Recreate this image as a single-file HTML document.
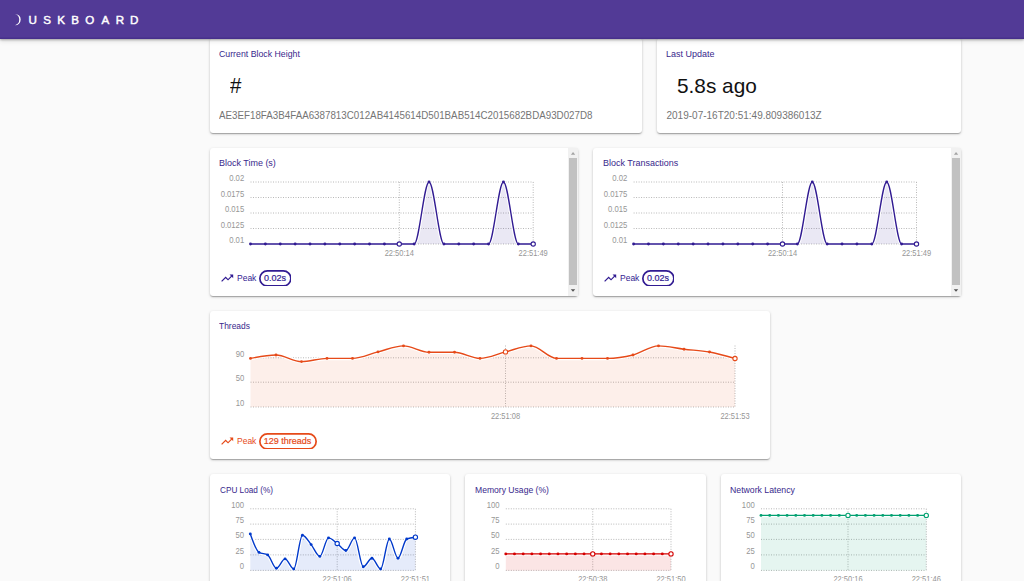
<!DOCTYPE html>
<html><head><meta charset="utf-8"><style>
html,body{margin:0;padding:0}
body{width:1024px;height:581px;overflow:hidden;background:#fafafa;position:relative;font-family:"Liberation Sans",sans-serif}
.hdr{position:absolute;left:0;top:0;width:1024px;height:38.5px;background:#523a96;z-index:5;box-shadow:inset 0 -1.6px 0 rgba(20,0,90,.16),0 1px 2px rgba(0,0,0,.28),0 2px 5px rgba(0,0,0,.12)}
.card{position:absolute;background:#fff;border-radius:3px;box-shadow:0 1px 3px 0 rgba(0,0,0,.2),0 1px 1px 0 rgba(0,0,0,.14),0 2px 1px -1px rgba(0,0,0,.12)}
.t{position:absolute;white-space:nowrap;z-index:2}
.ti{color:#38288c}
.sub{color:#757575}
.big{color:#111}
svg.ch{position:absolute;left:0;top:0;z-index:2}
.g{stroke:#b8b8b8;stroke-width:1;stroke-dasharray:1 1.5}
.yl,.xl{font-size:8.6px;fill:#969696;font-family:"Liberation Sans",sans-serif}
.ic{position:absolute;z-index:2}
.badge{position:absolute;z-index:2;height:12.8px;font-size:9px;-webkit-text-stroke:0.2px;line-height:12.8px;text-align:center}
.sb{position:absolute;z-index:3;background:#f1f1f1}
.sbt{position:absolute;background:#c1c1c1}
</style></head><body>

<div class="hdr"><svg style="position:absolute;left:0;top:0" width="30" height="38"><path d="M15,13.9 A5.65,5.65 0 0 1 15,25.3 A5.95,5.95 0 0 0 15,13.9Z" fill="#fff"/></svg><div class="t" style="left:22.80px;top:13px;width:20px;text-align:center;font-size:11.6px;line-height:14px;-webkit-text-stroke:0.45px #fff;color:#fff">U</div><div class="t" style="left:37.05px;top:13px;width:20px;text-align:center;font-size:11.6px;line-height:14px;-webkit-text-stroke:0.45px #fff;color:#fff">S</div><div class="t" style="left:51.10px;top:13px;width:20px;text-align:center;font-size:11.6px;line-height:14px;-webkit-text-stroke:0.45px #fff;color:#fff">K</div><div class="t" style="left:65.20px;top:13px;width:20px;text-align:center;font-size:11.6px;line-height:14px;-webkit-text-stroke:0.45px #fff;color:#fff">B</div><div class="t" style="left:79.80px;top:13px;width:20px;text-align:center;font-size:11.6px;line-height:14px;-webkit-text-stroke:0.45px #fff;color:#fff">O</div><div class="t" style="left:95.35px;top:13px;width:20px;text-align:center;font-size:11.6px;line-height:14px;-webkit-text-stroke:0.45px #fff;color:#fff">A</div><div class="t" style="left:110.05px;top:13px;width:20px;text-align:center;font-size:11.6px;line-height:14px;-webkit-text-stroke:0.45px #fff;color:#fff">R</div><div class="t" style="left:124.20px;top:13px;width:20px;text-align:center;font-size:11.6px;line-height:14px;-webkit-text-stroke:0.45px #fff;color:#fff">D</div></div>
<div class="card" style="left:210.00px;top:38.00px;width:432.00px;height:95.00px;"></div>
<div class="card" style="left:657.00px;top:38.00px;width:304.00px;height:95.00px;"></div>
<div class="card" style="left:210.00px;top:148.00px;width:368.00px;height:148.00px;"></div>
<div class="card" style="left:593.00px;top:148.00px;width:368.00px;height:148.00px;"></div>
<div class="card" style="left:210.00px;top:311.00px;width:559.50px;height:148.00px;"></div>
<div class="card" style="left:210.00px;top:474.00px;width:240.30px;height:160.00px;"></div>
<div class="card" style="left:465.30px;top:474.00px;width:240.40px;height:160.00px;"></div>
<div class="card" style="left:720.70px;top:474.00px;width:240.30px;height:160.00px;"></div>
<div class="t ti" style="left:219.30px;top:49.39px;font-size:9.40px;line-height:10.80px;transform:scaleX(0.9345);transform-origin:0 0">Current Block Height</div>
<div class="t big" style="left:229.90px;top:72.37px;font-size:22.80px;line-height:26.20px;transform:scaleX(0.9000);transform-origin:0 0">#</div>
<div class="t sub" style="left:218.80px;top:110.19px;font-size:10.40px;line-height:11.95px;transform:scaleX(0.9410);transform-origin:0 0">AE3EF18FA3B4FAA6387813C012AB4145614D501BAB514C2015682BDA93D027D8</div>
<div class="t ti" style="left:666.30px;top:49.39px;font-size:9.40px;line-height:10.80px;transform:scaleX(0.9574);transform-origin:0 0">Last Update</div>
<div class="t big" style="left:677.00px;top:73.98px;font-size:20.80px;line-height:23.90px">5.8s ago</div>
<div class="t sub" style="left:666.50px;top:109.65px;font-size:10.00px;line-height:11.49px">2019-07-16T20:51:49.809386013Z</div>
<div class="t ti" style="left:219.30px;top:158.29px;font-size:9.40px;line-height:10.80px;transform:scaleX(0.9574);transform-origin:0 0">Block Time (s)</div>
<div class="t ti" style="left:602.50px;top:158.29px;font-size:9.40px;line-height:10.80px;transform:scaleX(0.9574);transform-origin:0 0">Block Transactions</div>
<div class="t ti" style="left:219.30px;top:321.49px;font-size:9.40px;line-height:10.80px;transform:scaleX(0.9000);transform-origin:0 0">Threads</div>
<div class="t ti" style="left:219.50px;top:484.79px;font-size:9.40px;line-height:10.80px;transform:scaleX(0.8761);transform-origin:0 0">CPU Load (%)</div>
<div class="t ti" style="left:474.80px;top:484.79px;font-size:9.40px;line-height:10.80px;transform:scaleX(0.9153);transform-origin:0 0">Memory Usage (%)</div>
<div class="t ti" style="left:730.30px;top:484.79px;font-size:9.40px;line-height:10.80px;transform:scaleX(0.9287);transform-origin:0 0">Network Latency</div>
<svg class="ch" width="1024" height="581" viewBox="0 0 1024 581"><line x1="250.50" y1="244.00" x2="533.20" y2="244.00" class="g"/>
<line x1="250.50" y1="228.50" x2="533.20" y2="228.50" class="g"/>
<line x1="250.50" y1="213.00" x2="533.20" y2="213.00" class="g"/>
<line x1="250.50" y1="197.50" x2="533.20" y2="197.50" class="g"/>
<line x1="250.50" y1="182.00" x2="533.20" y2="182.00" class="g"/>
<line x1="399.29" y1="182.00" x2="399.29" y2="244.00" class="g"/>
<line x1="533.20" y1="182.00" x2="533.20" y2="244.00" class="g"/>
<path d="M250.50,244.00C255.46,244.00 260.42,244.00 265.38,244.00C270.34,244.00 275.30,244.00 280.26,244.00C285.22,244.00 290.18,244.00 295.14,244.00C300.10,244.00 305.06,244.00 310.02,244.00C314.98,244.00 319.94,244.00 324.89,244.00C329.85,244.00 334.81,244.00 339.77,244.00C344.73,244.00 349.69,244.00 354.65,244.00C359.61,244.00 364.57,244.00 369.53,244.00C374.49,244.00 379.45,244.00 384.41,244.00C389.37,244.00 394.33,244.00 399.29,244.00C404.25,244.00 409.21,244.00 414.17,244.00C419.13,244.00 424.09,182.00 429.05,182.00C434.01,182.00 438.97,244.00 443.93,244.00C448.89,244.00 453.85,244.00 458.81,244.00C463.76,244.00 468.72,244.00 473.68,244.00C478.64,244.00 483.60,244.00 488.56,244.00C493.52,244.00 498.48,182.00 503.44,182.00C508.40,182.00 513.36,244.00 518.32,244.00C523.28,244.00 528.24,244.00 533.20,244.00L533.20,244.00L250.50,244.00Z" fill="#311b92" fill-opacity="0.1" stroke="none"/>
<path d="M250.50,244.00C255.46,244.00 260.42,244.00 265.38,244.00C270.34,244.00 275.30,244.00 280.26,244.00C285.22,244.00 290.18,244.00 295.14,244.00C300.10,244.00 305.06,244.00 310.02,244.00C314.98,244.00 319.94,244.00 324.89,244.00C329.85,244.00 334.81,244.00 339.77,244.00C344.73,244.00 349.69,244.00 354.65,244.00C359.61,244.00 364.57,244.00 369.53,244.00C374.49,244.00 379.45,244.00 384.41,244.00C389.37,244.00 394.33,244.00 399.29,244.00C404.25,244.00 409.21,244.00 414.17,244.00C419.13,244.00 424.09,182.00 429.05,182.00C434.01,182.00 438.97,244.00 443.93,244.00C448.89,244.00 453.85,244.00 458.81,244.00C463.76,244.00 468.72,244.00 473.68,244.00C478.64,244.00 483.60,244.00 488.56,244.00C493.52,244.00 498.48,182.00 503.44,182.00C508.40,182.00 513.36,244.00 518.32,244.00C523.28,244.00 528.24,244.00 533.20,244.00" fill="none" stroke="#fff" stroke-width="3.6" stroke-linejoin="round"/>
<path d="M250.50,244.00C255.46,244.00 260.42,244.00 265.38,244.00C270.34,244.00 275.30,244.00 280.26,244.00C285.22,244.00 290.18,244.00 295.14,244.00C300.10,244.00 305.06,244.00 310.02,244.00C314.98,244.00 319.94,244.00 324.89,244.00C329.85,244.00 334.81,244.00 339.77,244.00C344.73,244.00 349.69,244.00 354.65,244.00C359.61,244.00 364.57,244.00 369.53,244.00C374.49,244.00 379.45,244.00 384.41,244.00C389.37,244.00 394.33,244.00 399.29,244.00C404.25,244.00 409.21,244.00 414.17,244.00C419.13,244.00 424.09,182.00 429.05,182.00C434.01,182.00 438.97,244.00 443.93,244.00C448.89,244.00 453.85,244.00 458.81,244.00C463.76,244.00 468.72,244.00 473.68,244.00C478.64,244.00 483.60,244.00 488.56,244.00C493.52,244.00 498.48,182.00 503.44,182.00C508.40,182.00 513.36,244.00 518.32,244.00C523.28,244.00 528.24,244.00 533.20,244.00" fill="none" stroke="#311b92" stroke-width="1.4"/>
<circle cx="250.50" cy="244.00" r="1.45" fill="#311b92"/>
<circle cx="265.38" cy="244.00" r="1.45" fill="#311b92"/>
<circle cx="280.26" cy="244.00" r="1.45" fill="#311b92"/>
<circle cx="295.14" cy="244.00" r="1.45" fill="#311b92"/>
<circle cx="310.02" cy="244.00" r="1.45" fill="#311b92"/>
<circle cx="324.89" cy="244.00" r="1.45" fill="#311b92"/>
<circle cx="339.77" cy="244.00" r="1.45" fill="#311b92"/>
<circle cx="354.65" cy="244.00" r="1.45" fill="#311b92"/>
<circle cx="369.53" cy="244.00" r="1.45" fill="#311b92"/>
<circle cx="384.41" cy="244.00" r="1.45" fill="#311b92"/>
<circle cx="399.29" cy="244.00" r="2.15" fill="#fff" stroke="#311b92" stroke-width="1.1"/>
<circle cx="414.17" cy="244.00" r="1.45" fill="#311b92"/>
<circle cx="429.05" cy="182.00" r="1.45" fill="#311b92"/>
<circle cx="443.93" cy="244.00" r="1.45" fill="#311b92"/>
<circle cx="458.81" cy="244.00" r="1.45" fill="#311b92"/>
<circle cx="473.68" cy="244.00" r="1.45" fill="#311b92"/>
<circle cx="488.56" cy="244.00" r="1.45" fill="#311b92"/>
<circle cx="503.44" cy="182.00" r="1.45" fill="#311b92"/>
<circle cx="518.32" cy="244.00" r="1.45" fill="#311b92"/>
<circle cx="533.20" cy="244.00" r="2.15" fill="#fff" stroke="#311b92" stroke-width="1.1"/>
<text x="229.21" y="243.00" class="yl" textLength="14.99" lengthAdjust="spacingAndGlyphs">0.01</text>
<text x="220.65" y="227.50" class="yl" textLength="23.55" lengthAdjust="spacingAndGlyphs">0.0125</text>
<text x="224.93" y="212.00" class="yl" textLength="19.27" lengthAdjust="spacingAndGlyphs">0.015</text>
<text x="220.65" y="196.50" class="yl" textLength="23.55" lengthAdjust="spacingAndGlyphs">0.0175</text>
<text x="229.21" y="181.00" class="yl" textLength="14.99" lengthAdjust="spacingAndGlyphs">0.02</text>
<text x="384.69" y="255.60" class="xl" textLength="29.19" lengthAdjust="spacingAndGlyphs">22:50:14</text>
<text x="518.60" y="255.60" class="xl" textLength="29.19" lengthAdjust="spacingAndGlyphs">22:51:49</text>
<line x1="633.60" y1="244.00" x2="916.50" y2="244.00" class="g"/>
<line x1="633.60" y1="228.50" x2="916.50" y2="228.50" class="g"/>
<line x1="633.60" y1="213.00" x2="916.50" y2="213.00" class="g"/>
<line x1="633.60" y1="197.50" x2="916.50" y2="197.50" class="g"/>
<line x1="633.60" y1="182.00" x2="916.50" y2="182.00" class="g"/>
<line x1="782.49" y1="182.00" x2="782.49" y2="244.00" class="g"/>
<line x1="916.50" y1="182.00" x2="916.50" y2="244.00" class="g"/>
<path d="M633.60,244.00C638.56,244.00 643.53,244.00 648.49,244.00C653.45,244.00 658.42,244.00 663.38,244.00C668.34,244.00 673.31,244.00 678.27,244.00C683.23,244.00 688.19,244.00 693.16,244.00C698.12,244.00 703.08,244.00 708.05,244.00C713.01,244.00 717.97,244.00 722.94,244.00C727.90,244.00 732.86,244.00 737.83,244.00C742.79,244.00 747.75,244.00 752.72,244.00C757.68,244.00 762.64,244.00 767.61,244.00C772.57,244.00 777.53,244.00 782.49,244.00C787.46,244.00 792.42,244.00 797.38,244.00C802.35,244.00 807.31,182.00 812.27,182.00C817.24,182.00 822.20,244.00 827.16,244.00C832.13,244.00 837.09,244.00 842.05,244.00C847.02,244.00 851.98,244.00 856.94,244.00C861.91,244.00 866.87,244.00 871.83,244.00C876.79,244.00 881.76,182.00 886.72,182.00C891.68,182.00 896.65,244.00 901.61,244.00C906.57,244.00 911.54,244.00 916.50,244.00L916.50,244.00L633.60,244.00Z" fill="#311b92" fill-opacity="0.1" stroke="none"/>
<path d="M633.60,244.00C638.56,244.00 643.53,244.00 648.49,244.00C653.45,244.00 658.42,244.00 663.38,244.00C668.34,244.00 673.31,244.00 678.27,244.00C683.23,244.00 688.19,244.00 693.16,244.00C698.12,244.00 703.08,244.00 708.05,244.00C713.01,244.00 717.97,244.00 722.94,244.00C727.90,244.00 732.86,244.00 737.83,244.00C742.79,244.00 747.75,244.00 752.72,244.00C757.68,244.00 762.64,244.00 767.61,244.00C772.57,244.00 777.53,244.00 782.49,244.00C787.46,244.00 792.42,244.00 797.38,244.00C802.35,244.00 807.31,182.00 812.27,182.00C817.24,182.00 822.20,244.00 827.16,244.00C832.13,244.00 837.09,244.00 842.05,244.00C847.02,244.00 851.98,244.00 856.94,244.00C861.91,244.00 866.87,244.00 871.83,244.00C876.79,244.00 881.76,182.00 886.72,182.00C891.68,182.00 896.65,244.00 901.61,244.00C906.57,244.00 911.54,244.00 916.50,244.00" fill="none" stroke="#fff" stroke-width="3.6" stroke-linejoin="round"/>
<path d="M633.60,244.00C638.56,244.00 643.53,244.00 648.49,244.00C653.45,244.00 658.42,244.00 663.38,244.00C668.34,244.00 673.31,244.00 678.27,244.00C683.23,244.00 688.19,244.00 693.16,244.00C698.12,244.00 703.08,244.00 708.05,244.00C713.01,244.00 717.97,244.00 722.94,244.00C727.90,244.00 732.86,244.00 737.83,244.00C742.79,244.00 747.75,244.00 752.72,244.00C757.68,244.00 762.64,244.00 767.61,244.00C772.57,244.00 777.53,244.00 782.49,244.00C787.46,244.00 792.42,244.00 797.38,244.00C802.35,244.00 807.31,182.00 812.27,182.00C817.24,182.00 822.20,244.00 827.16,244.00C832.13,244.00 837.09,244.00 842.05,244.00C847.02,244.00 851.98,244.00 856.94,244.00C861.91,244.00 866.87,244.00 871.83,244.00C876.79,244.00 881.76,182.00 886.72,182.00C891.68,182.00 896.65,244.00 901.61,244.00C906.57,244.00 911.54,244.00 916.50,244.00" fill="none" stroke="#311b92" stroke-width="1.4"/>
<circle cx="633.60" cy="244.00" r="1.45" fill="#311b92"/>
<circle cx="648.49" cy="244.00" r="1.45" fill="#311b92"/>
<circle cx="663.38" cy="244.00" r="1.45" fill="#311b92"/>
<circle cx="678.27" cy="244.00" r="1.45" fill="#311b92"/>
<circle cx="693.16" cy="244.00" r="1.45" fill="#311b92"/>
<circle cx="708.05" cy="244.00" r="1.45" fill="#311b92"/>
<circle cx="722.94" cy="244.00" r="1.45" fill="#311b92"/>
<circle cx="737.83" cy="244.00" r="1.45" fill="#311b92"/>
<circle cx="752.72" cy="244.00" r="1.45" fill="#311b92"/>
<circle cx="767.61" cy="244.00" r="1.45" fill="#311b92"/>
<circle cx="782.49" cy="244.00" r="2.15" fill="#fff" stroke="#311b92" stroke-width="1.1"/>
<circle cx="797.38" cy="244.00" r="1.45" fill="#311b92"/>
<circle cx="812.27" cy="182.00" r="1.45" fill="#311b92"/>
<circle cx="827.16" cy="244.00" r="1.45" fill="#311b92"/>
<circle cx="842.05" cy="244.00" r="1.45" fill="#311b92"/>
<circle cx="856.94" cy="244.00" r="1.45" fill="#311b92"/>
<circle cx="871.83" cy="244.00" r="1.45" fill="#311b92"/>
<circle cx="886.72" cy="182.00" r="1.45" fill="#311b92"/>
<circle cx="901.61" cy="244.00" r="1.45" fill="#311b92"/>
<circle cx="916.50" cy="244.00" r="2.15" fill="#fff" stroke="#311b92" stroke-width="1.1"/>
<text x="612.31" y="243.00" class="yl" textLength="14.99" lengthAdjust="spacingAndGlyphs">0.01</text>
<text x="603.75" y="227.50" class="yl" textLength="23.55" lengthAdjust="spacingAndGlyphs">0.0125</text>
<text x="608.03" y="212.00" class="yl" textLength="19.27" lengthAdjust="spacingAndGlyphs">0.015</text>
<text x="603.75" y="196.50" class="yl" textLength="23.55" lengthAdjust="spacingAndGlyphs">0.0175</text>
<text x="612.31" y="181.00" class="yl" textLength="14.99" lengthAdjust="spacingAndGlyphs">0.02</text>
<text x="767.90" y="255.60" class="xl" textLength="29.19" lengthAdjust="spacingAndGlyphs">22:50:14</text>
<text x="901.90" y="255.60" class="xl" textLength="29.19" lengthAdjust="spacingAndGlyphs">22:51:49</text>
<line x1="250.50" y1="407.00" x2="735.00" y2="407.00" class="g"/>
<line x1="250.50" y1="382.20" x2="735.00" y2="382.20" class="g"/>
<line x1="250.50" y1="357.80" x2="735.00" y2="357.80" class="g"/>
<line x1="505.50" y1="345.50" x2="505.50" y2="407.00" class="g"/>
<line x1="735.00" y1="345.50" x2="735.00" y2="407.00" class="g"/>
<path d="M250.50,358.40C259.00,356.70 267.50,355.00 276.00,355.00C284.50,355.00 293.00,361.60 301.50,361.60C310.00,361.60 318.50,358.40 327.00,358.40C335.50,358.40 344.00,358.40 352.50,358.40C361.00,358.40 369.50,353.98 378.00,351.90C386.50,349.82 395.00,345.90 403.50,345.90C412.00,345.90 420.50,352.20 429.00,352.20C437.50,352.20 446.00,352.20 454.50,352.20C463.00,352.20 471.50,358.40 480.00,358.40C488.50,358.40 497.00,353.98 505.50,351.90C514.00,349.82 522.50,345.90 531.00,345.90C539.50,345.90 548.00,358.40 556.50,358.40C565.00,358.40 573.50,358.40 582.00,358.40C590.50,358.40 599.00,358.40 607.50,358.40C616.00,358.40 624.50,357.08 633.00,355.00C641.50,352.92 650.00,345.90 658.50,345.90C667.00,345.90 675.50,348.18 684.00,349.20C692.50,350.22 701.00,350.45 709.50,352.00C718.00,353.55 726.50,356.02 735.00,358.50L735.00,407.00L250.50,407.00Z" fill="#e64a19" fill-opacity="0.09" stroke="none"/>
<path d="M250.50,358.40C259.00,356.70 267.50,355.00 276.00,355.00C284.50,355.00 293.00,361.60 301.50,361.60C310.00,361.60 318.50,358.40 327.00,358.40C335.50,358.40 344.00,358.40 352.50,358.40C361.00,358.40 369.50,353.98 378.00,351.90C386.50,349.82 395.00,345.90 403.50,345.90C412.00,345.90 420.50,352.20 429.00,352.20C437.50,352.20 446.00,352.20 454.50,352.20C463.00,352.20 471.50,358.40 480.00,358.40C488.50,358.40 497.00,353.98 505.50,351.90C514.00,349.82 522.50,345.90 531.00,345.90C539.50,345.90 548.00,358.40 556.50,358.40C565.00,358.40 573.50,358.40 582.00,358.40C590.50,358.40 599.00,358.40 607.50,358.40C616.00,358.40 624.50,357.08 633.00,355.00C641.50,352.92 650.00,345.90 658.50,345.90C667.00,345.90 675.50,348.18 684.00,349.20C692.50,350.22 701.00,350.45 709.50,352.00C718.00,353.55 726.50,356.02 735.00,358.50" fill="none" stroke="#fff" stroke-width="3.6" stroke-linejoin="round"/>
<path d="M250.50,358.40C259.00,356.70 267.50,355.00 276.00,355.00C284.50,355.00 293.00,361.60 301.50,361.60C310.00,361.60 318.50,358.40 327.00,358.40C335.50,358.40 344.00,358.40 352.50,358.40C361.00,358.40 369.50,353.98 378.00,351.90C386.50,349.82 395.00,345.90 403.50,345.90C412.00,345.90 420.50,352.20 429.00,352.20C437.50,352.20 446.00,352.20 454.50,352.20C463.00,352.20 471.50,358.40 480.00,358.40C488.50,358.40 497.00,353.98 505.50,351.90C514.00,349.82 522.50,345.90 531.00,345.90C539.50,345.90 548.00,358.40 556.50,358.40C565.00,358.40 573.50,358.40 582.00,358.40C590.50,358.40 599.00,358.40 607.50,358.40C616.00,358.40 624.50,357.08 633.00,355.00C641.50,352.92 650.00,345.90 658.50,345.90C667.00,345.90 675.50,348.18 684.00,349.20C692.50,350.22 701.00,350.45 709.50,352.00C718.00,353.55 726.50,356.02 735.00,358.50" fill="none" stroke="#e64a19" stroke-width="1.4"/>
<circle cx="250.50" cy="358.40" r="1.45" fill="#e64a19"/>
<circle cx="276.00" cy="355.00" r="1.45" fill="#e64a19"/>
<circle cx="301.50" cy="361.60" r="1.45" fill="#e64a19"/>
<circle cx="327.00" cy="358.40" r="1.45" fill="#e64a19"/>
<circle cx="352.50" cy="358.40" r="1.45" fill="#e64a19"/>
<circle cx="378.00" cy="351.90" r="1.45" fill="#e64a19"/>
<circle cx="403.50" cy="345.90" r="1.45" fill="#e64a19"/>
<circle cx="429.00" cy="352.20" r="1.45" fill="#e64a19"/>
<circle cx="454.50" cy="352.20" r="1.45" fill="#e64a19"/>
<circle cx="480.00" cy="358.40" r="1.45" fill="#e64a19"/>
<circle cx="505.50" cy="351.90" r="2.15" fill="#fff" stroke="#e64a19" stroke-width="1.1"/>
<circle cx="531.00" cy="345.90" r="1.45" fill="#e64a19"/>
<circle cx="556.50" cy="358.40" r="1.45" fill="#e64a19"/>
<circle cx="582.00" cy="358.40" r="1.45" fill="#e64a19"/>
<circle cx="607.50" cy="358.40" r="1.45" fill="#e64a19"/>
<circle cx="633.00" cy="355.00" r="1.45" fill="#e64a19"/>
<circle cx="658.50" cy="345.90" r="1.45" fill="#e64a19"/>
<circle cx="684.00" cy="349.20" r="1.45" fill="#e64a19"/>
<circle cx="709.50" cy="352.00" r="1.45" fill="#e64a19"/>
<circle cx="735.00" cy="358.50" r="2.15" fill="#fff" stroke="#e64a19" stroke-width="1.1"/>
<text x="235.64" y="406.00" class="yl" textLength="8.56" lengthAdjust="spacingAndGlyphs">10</text>
<text x="235.64" y="381.20" class="yl" textLength="8.56" lengthAdjust="spacingAndGlyphs">50</text>
<text x="235.64" y="356.80" class="yl" textLength="8.56" lengthAdjust="spacingAndGlyphs">90</text>
<text x="490.90" y="418.60" class="xl" textLength="29.19" lengthAdjust="spacingAndGlyphs">22:51:08</text>
<text x="720.40" y="418.60" class="xl" textLength="29.19" lengthAdjust="spacingAndGlyphs">22:51:53</text>
<line x1="250.30" y1="570.40" x2="415.40" y2="570.40" class="g"/>
<line x1="250.30" y1="554.90" x2="415.40" y2="554.90" class="g"/>
<line x1="250.30" y1="539.40" x2="415.40" y2="539.40" class="g"/>
<line x1="250.30" y1="524.10" x2="415.40" y2="524.10" class="g"/>
<line x1="250.30" y1="508.80" x2="415.40" y2="508.80" class="g"/>
<line x1="337.19" y1="508.80" x2="337.19" y2="570.40" class="g"/>
<line x1="415.40" y1="508.80" x2="415.40" y2="570.40" class="g"/>
<path d="M250.30,533.90C253.20,542.32 256.09,550.73 258.99,552.40C261.89,554.07 264.78,553.23 267.68,554.90C270.58,556.57 273.47,568.20 276.37,568.20C279.26,568.20 282.16,558.90 285.06,558.90C287.95,558.90 290.85,569.00 293.75,569.00C296.64,569.00 299.54,535.20 302.44,535.20C305.33,535.20 308.23,541.07 311.13,544.60C314.02,548.13 316.92,556.40 319.82,556.40C322.71,556.40 325.61,537.90 328.51,537.90C331.40,537.90 334.30,541.40 337.19,543.50C340.09,545.60 342.99,550.50 345.88,550.50C348.78,550.50 351.68,537.90 354.57,537.90C357.47,537.90 360.37,566.70 363.26,566.70C366.16,566.70 369.06,558.30 371.95,558.30C374.85,558.30 377.75,569.00 380.64,569.00C383.54,569.00 386.44,539.00 389.33,539.00C392.23,539.00 395.12,558.20 398.02,558.20C400.92,558.20 403.81,540.20 406.71,539.00C409.61,537.80 412.50,537.50 415.40,537.20L415.40,570.40L250.30,570.40Z" fill="#0039cb" fill-opacity="0.1" stroke="none"/>
<path d="M250.30,533.90C253.20,542.32 256.09,550.73 258.99,552.40C261.89,554.07 264.78,553.23 267.68,554.90C270.58,556.57 273.47,568.20 276.37,568.20C279.26,568.20 282.16,558.90 285.06,558.90C287.95,558.90 290.85,569.00 293.75,569.00C296.64,569.00 299.54,535.20 302.44,535.20C305.33,535.20 308.23,541.07 311.13,544.60C314.02,548.13 316.92,556.40 319.82,556.40C322.71,556.40 325.61,537.90 328.51,537.90C331.40,537.90 334.30,541.40 337.19,543.50C340.09,545.60 342.99,550.50 345.88,550.50C348.78,550.50 351.68,537.90 354.57,537.90C357.47,537.90 360.37,566.70 363.26,566.70C366.16,566.70 369.06,558.30 371.95,558.30C374.85,558.30 377.75,569.00 380.64,569.00C383.54,569.00 386.44,539.00 389.33,539.00C392.23,539.00 395.12,558.20 398.02,558.20C400.92,558.20 403.81,540.20 406.71,539.00C409.61,537.80 412.50,537.50 415.40,537.20" fill="none" stroke="#fff" stroke-width="3.6" stroke-linejoin="round"/>
<path d="M250.30,533.90C253.20,542.32 256.09,550.73 258.99,552.40C261.89,554.07 264.78,553.23 267.68,554.90C270.58,556.57 273.47,568.20 276.37,568.20C279.26,568.20 282.16,558.90 285.06,558.90C287.95,558.90 290.85,569.00 293.75,569.00C296.64,569.00 299.54,535.20 302.44,535.20C305.33,535.20 308.23,541.07 311.13,544.60C314.02,548.13 316.92,556.40 319.82,556.40C322.71,556.40 325.61,537.90 328.51,537.90C331.40,537.90 334.30,541.40 337.19,543.50C340.09,545.60 342.99,550.50 345.88,550.50C348.78,550.50 351.68,537.90 354.57,537.90C357.47,537.90 360.37,566.70 363.26,566.70C366.16,566.70 369.06,558.30 371.95,558.30C374.85,558.30 377.75,569.00 380.64,569.00C383.54,569.00 386.44,539.00 389.33,539.00C392.23,539.00 395.12,558.20 398.02,558.20C400.92,558.20 403.81,540.20 406.71,539.00C409.61,537.80 412.50,537.50 415.40,537.20" fill="none" stroke="#0039cb" stroke-width="1.4"/>
<circle cx="250.30" cy="533.90" r="1.45" fill="#0039cb"/>
<circle cx="258.99" cy="552.40" r="1.45" fill="#0039cb"/>
<circle cx="267.68" cy="554.90" r="1.45" fill="#0039cb"/>
<circle cx="276.37" cy="568.20" r="1.45" fill="#0039cb"/>
<circle cx="285.06" cy="558.90" r="1.45" fill="#0039cb"/>
<circle cx="293.75" cy="569.00" r="1.45" fill="#0039cb"/>
<circle cx="302.44" cy="535.20" r="1.45" fill="#0039cb"/>
<circle cx="311.13" cy="544.60" r="1.45" fill="#0039cb"/>
<circle cx="319.82" cy="556.40" r="1.45" fill="#0039cb"/>
<circle cx="328.51" cy="537.90" r="1.45" fill="#0039cb"/>
<circle cx="337.19" cy="543.50" r="2.15" fill="#fff" stroke="#0039cb" stroke-width="1.1"/>
<circle cx="345.88" cy="550.50" r="1.45" fill="#0039cb"/>
<circle cx="354.57" cy="537.90" r="1.45" fill="#0039cb"/>
<circle cx="363.26" cy="566.70" r="1.45" fill="#0039cb"/>
<circle cx="371.95" cy="558.30" r="1.45" fill="#0039cb"/>
<circle cx="380.64" cy="569.00" r="1.45" fill="#0039cb"/>
<circle cx="389.33" cy="539.00" r="1.45" fill="#0039cb"/>
<circle cx="398.02" cy="558.20" r="1.45" fill="#0039cb"/>
<circle cx="406.71" cy="539.00" r="1.45" fill="#0039cb"/>
<circle cx="415.40" cy="537.20" r="2.15" fill="#fff" stroke="#0039cb" stroke-width="1.1"/>
<text x="239.72" y="569.40" class="yl" textLength="4.28" lengthAdjust="spacingAndGlyphs">0</text>
<text x="235.44" y="553.90" class="yl" textLength="8.56" lengthAdjust="spacingAndGlyphs">25</text>
<text x="235.44" y="538.40" class="yl" textLength="8.56" lengthAdjust="spacingAndGlyphs">50</text>
<text x="235.44" y="523.10" class="yl" textLength="8.56" lengthAdjust="spacingAndGlyphs">75</text>
<text x="231.15" y="507.80" class="yl" textLength="12.85" lengthAdjust="spacingAndGlyphs">100</text>
<text x="322.60" y="582.00" class="xl" textLength="29.19" lengthAdjust="spacingAndGlyphs">22:51:06</text>
<text x="400.80" y="582.00" class="xl" textLength="29.19" lengthAdjust="spacingAndGlyphs">22:51:51</text>
<line x1="505.80" y1="570.40" x2="671.00" y2="570.40" class="g"/>
<line x1="505.80" y1="554.90" x2="671.00" y2="554.90" class="g"/>
<line x1="505.80" y1="539.40" x2="671.00" y2="539.40" class="g"/>
<line x1="505.80" y1="524.10" x2="671.00" y2="524.10" class="g"/>
<line x1="505.80" y1="508.80" x2="671.00" y2="508.80" class="g"/>
<line x1="592.75" y1="508.80" x2="592.75" y2="570.40" class="g"/>
<line x1="671.00" y1="508.80" x2="671.00" y2="570.40" class="g"/>
<path d="M505.80,553.90C508.70,553.90 511.60,553.90 514.49,553.90C517.39,553.90 520.29,553.90 523.19,553.90C526.09,553.90 528.99,553.90 531.88,553.90C534.78,553.90 537.68,553.90 540.58,553.90C543.48,553.90 546.38,553.90 549.27,553.90C552.17,553.90 555.07,553.90 557.97,553.90C560.87,553.90 563.76,553.90 566.66,553.90C569.56,553.90 572.46,553.90 575.36,553.90C578.26,553.90 581.15,553.90 584.05,553.90C586.95,553.90 589.85,553.90 592.75,553.90C595.65,553.90 598.54,553.90 601.44,553.90C604.34,553.90 607.24,553.90 610.14,553.90C613.04,553.90 615.93,553.90 618.83,553.90C621.73,553.90 624.63,553.90 627.53,553.90C630.42,553.90 633.32,553.90 636.22,553.90C639.12,553.90 642.02,553.90 644.92,553.90C647.81,553.90 650.71,553.90 653.61,553.90C656.51,553.90 659.41,553.90 662.31,553.90C665.20,553.90 668.10,553.90 671.00,553.90L671.00,570.40L505.80,570.40Z" fill="#d50000" fill-opacity="0.1" stroke="none"/>
<path d="M505.80,553.90C508.70,553.90 511.60,553.90 514.49,553.90C517.39,553.90 520.29,553.90 523.19,553.90C526.09,553.90 528.99,553.90 531.88,553.90C534.78,553.90 537.68,553.90 540.58,553.90C543.48,553.90 546.38,553.90 549.27,553.90C552.17,553.90 555.07,553.90 557.97,553.90C560.87,553.90 563.76,553.90 566.66,553.90C569.56,553.90 572.46,553.90 575.36,553.90C578.26,553.90 581.15,553.90 584.05,553.90C586.95,553.90 589.85,553.90 592.75,553.90C595.65,553.90 598.54,553.90 601.44,553.90C604.34,553.90 607.24,553.90 610.14,553.90C613.04,553.90 615.93,553.90 618.83,553.90C621.73,553.90 624.63,553.90 627.53,553.90C630.42,553.90 633.32,553.90 636.22,553.90C639.12,553.90 642.02,553.90 644.92,553.90C647.81,553.90 650.71,553.90 653.61,553.90C656.51,553.90 659.41,553.90 662.31,553.90C665.20,553.90 668.10,553.90 671.00,553.90" fill="none" stroke="#fff" stroke-width="3.6" stroke-linejoin="round"/>
<path d="M505.80,553.90C508.70,553.90 511.60,553.90 514.49,553.90C517.39,553.90 520.29,553.90 523.19,553.90C526.09,553.90 528.99,553.90 531.88,553.90C534.78,553.90 537.68,553.90 540.58,553.90C543.48,553.90 546.38,553.90 549.27,553.90C552.17,553.90 555.07,553.90 557.97,553.90C560.87,553.90 563.76,553.90 566.66,553.90C569.56,553.90 572.46,553.90 575.36,553.90C578.26,553.90 581.15,553.90 584.05,553.90C586.95,553.90 589.85,553.90 592.75,553.90C595.65,553.90 598.54,553.90 601.44,553.90C604.34,553.90 607.24,553.90 610.14,553.90C613.04,553.90 615.93,553.90 618.83,553.90C621.73,553.90 624.63,553.90 627.53,553.90C630.42,553.90 633.32,553.90 636.22,553.90C639.12,553.90 642.02,553.90 644.92,553.90C647.81,553.90 650.71,553.90 653.61,553.90C656.51,553.90 659.41,553.90 662.31,553.90C665.20,553.90 668.10,553.90 671.00,553.90" fill="none" stroke="#d50000" stroke-width="1.4"/>
<circle cx="505.80" cy="553.90" r="1.45" fill="#d50000"/>
<circle cx="514.49" cy="553.90" r="1.45" fill="#d50000"/>
<circle cx="523.19" cy="553.90" r="1.45" fill="#d50000"/>
<circle cx="531.88" cy="553.90" r="1.45" fill="#d50000"/>
<circle cx="540.58" cy="553.90" r="1.45" fill="#d50000"/>
<circle cx="549.27" cy="553.90" r="1.45" fill="#d50000"/>
<circle cx="557.97" cy="553.90" r="1.45" fill="#d50000"/>
<circle cx="566.66" cy="553.90" r="1.45" fill="#d50000"/>
<circle cx="575.36" cy="553.90" r="1.45" fill="#d50000"/>
<circle cx="584.05" cy="553.90" r="1.45" fill="#d50000"/>
<circle cx="592.75" cy="553.90" r="2.15" fill="#fff" stroke="#d50000" stroke-width="1.1"/>
<circle cx="601.44" cy="553.90" r="1.45" fill="#d50000"/>
<circle cx="610.14" cy="553.90" r="1.45" fill="#d50000"/>
<circle cx="618.83" cy="553.90" r="1.45" fill="#d50000"/>
<circle cx="627.53" cy="553.90" r="1.45" fill="#d50000"/>
<circle cx="636.22" cy="553.90" r="1.45" fill="#d50000"/>
<circle cx="644.92" cy="553.90" r="1.45" fill="#d50000"/>
<circle cx="653.61" cy="553.90" r="1.45" fill="#d50000"/>
<circle cx="662.31" cy="553.90" r="1.45" fill="#d50000"/>
<circle cx="671.00" cy="553.90" r="2.15" fill="#fff" stroke="#d50000" stroke-width="1.1"/>
<text x="495.22" y="569.40" class="yl" textLength="4.28" lengthAdjust="spacingAndGlyphs">0</text>
<text x="490.94" y="553.90" class="yl" textLength="8.56" lengthAdjust="spacingAndGlyphs">25</text>
<text x="490.94" y="538.40" class="yl" textLength="8.56" lengthAdjust="spacingAndGlyphs">50</text>
<text x="490.94" y="523.10" class="yl" textLength="8.56" lengthAdjust="spacingAndGlyphs">75</text>
<text x="486.65" y="507.80" class="yl" textLength="12.85" lengthAdjust="spacingAndGlyphs">100</text>
<text x="578.15" y="582.00" class="xl" textLength="29.19" lengthAdjust="spacingAndGlyphs">22:50:38</text>
<text x="656.40" y="582.00" class="xl" textLength="29.19" lengthAdjust="spacingAndGlyphs">22:51:50</text>
<line x1="761.00" y1="570.40" x2="926.30" y2="570.40" class="g"/>
<line x1="761.00" y1="554.90" x2="926.30" y2="554.90" class="g"/>
<line x1="761.00" y1="539.40" x2="926.30" y2="539.40" class="g"/>
<line x1="761.00" y1="524.10" x2="926.30" y2="524.10" class="g"/>
<line x1="761.00" y1="508.80" x2="926.30" y2="508.80" class="g"/>
<line x1="848.00" y1="508.80" x2="848.00" y2="570.40" class="g"/>
<line x1="926.30" y1="508.80" x2="926.30" y2="570.40" class="g"/>
<path d="M761.00,515.40C763.90,515.40 766.80,515.40 769.70,515.40C772.60,515.40 775.50,515.40 778.40,515.40C781.30,515.40 784.20,515.40 787.10,515.40C790.00,515.40 792.90,515.40 795.80,515.40C798.70,515.40 801.60,515.40 804.50,515.40C807.40,515.40 810.30,515.40 813.20,515.40C816.10,515.40 819.00,515.40 821.90,515.40C824.80,515.40 827.70,515.40 830.60,515.40C833.50,515.40 836.40,515.40 839.30,515.40C842.20,515.40 845.10,515.40 848.00,515.40C850.90,515.40 853.80,515.40 856.70,515.40C859.60,515.40 862.50,515.40 865.40,515.40C868.30,515.40 871.20,515.40 874.10,515.40C877.00,515.40 879.90,515.40 882.80,515.40C885.70,515.40 888.60,515.40 891.50,515.40C894.40,515.40 897.30,515.40 900.20,515.40C903.10,515.40 906.00,515.40 908.90,515.40C911.80,515.40 914.70,515.40 917.60,515.40C920.50,515.40 923.40,515.40 926.30,515.40L926.30,570.40L761.00,570.40Z" fill="#00a070" fill-opacity="0.1" stroke="none"/>
<path d="M761.00,515.40C763.90,515.40 766.80,515.40 769.70,515.40C772.60,515.40 775.50,515.40 778.40,515.40C781.30,515.40 784.20,515.40 787.10,515.40C790.00,515.40 792.90,515.40 795.80,515.40C798.70,515.40 801.60,515.40 804.50,515.40C807.40,515.40 810.30,515.40 813.20,515.40C816.10,515.40 819.00,515.40 821.90,515.40C824.80,515.40 827.70,515.40 830.60,515.40C833.50,515.40 836.40,515.40 839.30,515.40C842.20,515.40 845.10,515.40 848.00,515.40C850.90,515.40 853.80,515.40 856.70,515.40C859.60,515.40 862.50,515.40 865.40,515.40C868.30,515.40 871.20,515.40 874.10,515.40C877.00,515.40 879.90,515.40 882.80,515.40C885.70,515.40 888.60,515.40 891.50,515.40C894.40,515.40 897.30,515.40 900.20,515.40C903.10,515.40 906.00,515.40 908.90,515.40C911.80,515.40 914.70,515.40 917.60,515.40C920.50,515.40 923.40,515.40 926.30,515.40" fill="none" stroke="#fff" stroke-width="3.6" stroke-linejoin="round"/>
<path d="M761.00,515.40C763.90,515.40 766.80,515.40 769.70,515.40C772.60,515.40 775.50,515.40 778.40,515.40C781.30,515.40 784.20,515.40 787.10,515.40C790.00,515.40 792.90,515.40 795.80,515.40C798.70,515.40 801.60,515.40 804.50,515.40C807.40,515.40 810.30,515.40 813.20,515.40C816.10,515.40 819.00,515.40 821.90,515.40C824.80,515.40 827.70,515.40 830.60,515.40C833.50,515.40 836.40,515.40 839.30,515.40C842.20,515.40 845.10,515.40 848.00,515.40C850.90,515.40 853.80,515.40 856.70,515.40C859.60,515.40 862.50,515.40 865.40,515.40C868.30,515.40 871.20,515.40 874.10,515.40C877.00,515.40 879.90,515.40 882.80,515.40C885.70,515.40 888.60,515.40 891.50,515.40C894.40,515.40 897.30,515.40 900.20,515.40C903.10,515.40 906.00,515.40 908.90,515.40C911.80,515.40 914.70,515.40 917.60,515.40C920.50,515.40 923.40,515.40 926.30,515.40" fill="none" stroke="#00a070" stroke-width="1.4"/>
<circle cx="761.00" cy="515.40" r="1.45" fill="#00a070"/>
<circle cx="769.70" cy="515.40" r="1.45" fill="#00a070"/>
<circle cx="778.40" cy="515.40" r="1.45" fill="#00a070"/>
<circle cx="787.10" cy="515.40" r="1.45" fill="#00a070"/>
<circle cx="795.80" cy="515.40" r="1.45" fill="#00a070"/>
<circle cx="804.50" cy="515.40" r="1.45" fill="#00a070"/>
<circle cx="813.20" cy="515.40" r="1.45" fill="#00a070"/>
<circle cx="821.90" cy="515.40" r="1.45" fill="#00a070"/>
<circle cx="830.60" cy="515.40" r="1.45" fill="#00a070"/>
<circle cx="839.30" cy="515.40" r="1.45" fill="#00a070"/>
<circle cx="848.00" cy="515.40" r="2.15" fill="#fff" stroke="#00a070" stroke-width="1.1"/>
<circle cx="856.70" cy="515.40" r="1.45" fill="#00a070"/>
<circle cx="865.40" cy="515.40" r="1.45" fill="#00a070"/>
<circle cx="874.10" cy="515.40" r="1.45" fill="#00a070"/>
<circle cx="882.80" cy="515.40" r="1.45" fill="#00a070"/>
<circle cx="891.50" cy="515.40" r="1.45" fill="#00a070"/>
<circle cx="900.20" cy="515.40" r="1.45" fill="#00a070"/>
<circle cx="908.90" cy="515.40" r="1.45" fill="#00a070"/>
<circle cx="917.60" cy="515.40" r="1.45" fill="#00a070"/>
<circle cx="926.30" cy="515.40" r="2.15" fill="#fff" stroke="#00a070" stroke-width="1.1"/>
<text x="750.42" y="569.40" class="yl" textLength="4.28" lengthAdjust="spacingAndGlyphs">0</text>
<text x="746.14" y="553.90" class="yl" textLength="8.56" lengthAdjust="spacingAndGlyphs">25</text>
<text x="746.14" y="538.40" class="yl" textLength="8.56" lengthAdjust="spacingAndGlyphs">50</text>
<text x="746.14" y="523.10" class="yl" textLength="8.56" lengthAdjust="spacingAndGlyphs">75</text>
<text x="741.85" y="507.80" class="yl" textLength="12.85" lengthAdjust="spacingAndGlyphs">100</text>
<text x="833.40" y="582.00" class="xl" textLength="29.19" lengthAdjust="spacingAndGlyphs">22:50:16</text>
<text x="911.70" y="582.00" class="xl" textLength="29.19" lengthAdjust="spacingAndGlyphs">22:51:46</text></svg>
<svg class="ic" style="left:219.80px;top:271.00px" width="14.4" height="14.4" viewBox="0 0 24 24"><path fill="#311b92" d="M16 6l2.29 2.29-4.88 4.88-4-4L2 16.59 3.41 18l6-6 4 4 6.3-6.29L22 12V6z"/></svg>
<div class="t pk"  style="color:#311b92;left:237.00px;top:273.91px;font-size:8.50px;line-height:9.77px">Peak</div>
<svg class="ic" style="left:258.60px;top:269.70px" width="32.70" height="16.80"><rect x="0.85" y="0.85" width="31.00" height="15.10" rx="7.55" fill="none" stroke="#311b92" stroke-width="1.70"/></svg>
<div class="badge" style="left:258.60px;top:271.70px;width:32.70px;color:#311b92">0.02s</div>
<svg class="ic" style="left:602.80px;top:271.00px" width="14.4" height="14.4" viewBox="0 0 24 24"><path fill="#311b92" d="M16 6l2.29 2.29-4.88 4.88-4-4L2 16.59 3.41 18l6-6 4 4 6.3-6.29L22 12V6z"/></svg>
<div class="t pk"  style="color:#311b92;left:620.00px;top:273.91px;font-size:8.50px;line-height:9.77px">Peak</div>
<svg class="ic" style="left:641.60px;top:269.70px" width="32.70" height="16.80"><rect x="0.85" y="0.85" width="31.00" height="15.10" rx="7.55" fill="none" stroke="#311b92" stroke-width="1.70"/></svg>
<div class="badge" style="left:641.60px;top:271.70px;width:32.70px;color:#311b92">0.02s</div>
<svg class="ic" style="left:219.80px;top:434.00px" width="14.4" height="14.4" viewBox="0 0 24 24"><path fill="#e64a19" d="M16 6l2.29 2.29-4.88 4.88-4-4L2 16.59 3.41 18l6-6 4 4 6.3-6.29L22 12V6z"/></svg>
<div class="t pk"  style="color:#e64a19;left:237.00px;top:436.91px;font-size:8.50px;line-height:9.77px">Peak</div>
<svg class="ic" style="left:258.60px;top:432.70px" width="58.00" height="16.80"><rect x="0.85" y="0.85" width="56.30" height="15.10" rx="7.55" fill="none" stroke="#e64a19" stroke-width="1.70"/></svg>
<div class="badge" style="left:258.60px;top:434.70px;width:58.00px;color:#e64a19">129 threads</div>
<div class="sb" style="left:568px;top:148px;width:10px;height:148px"><div class="sbt" style="left:1px;top:10px;width:8px;height:127px"></div><svg style="position:absolute;left:0;top:0" width="10" height="148"><path d="M2.9,6.8 L7.2,6.8 L5.05,4Z" fill="#a3a3a3"/><path d="M2.8,141.2 L7.2,141.2 L5,143.8Z" fill="#505050"/></svg></div>
<div class="sb" style="left:951px;top:148px;width:10px;height:148px"><div class="sbt" style="left:1px;top:10px;width:8px;height:127px"></div><svg style="position:absolute;left:0;top:0" width="10" height="148"><path d="M2.9,6.8 L7.2,6.8 L5.05,4Z" fill="#a3a3a3"/><path d="M2.8,141.2 L7.2,141.2 L5,143.8Z" fill="#505050"/></svg></div>
</body></html>
